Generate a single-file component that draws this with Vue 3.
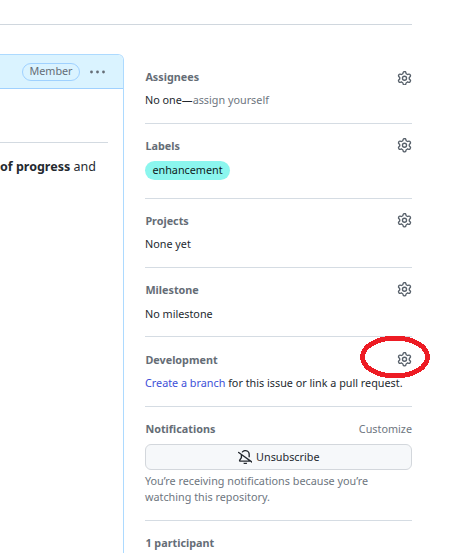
<script setup>
const gear =
  'M8 0a8.2 8.2 0 0 1 .701.031C9.444.095 9.99.645 10.16 1.29l.288 1.107c.018.066.079.158.212.224.231.114.454.243.668.386.123.082.233.09.299.071l1.103-.303c.644-.176 1.392.021 1.82.63.27.385.506.792.704 1.218.315.675.111 1.422-.364 1.891l-.814.806c-.049.048-.098.147-.088.294.016.257.016.515 0 .772-.01.147.038.246.088.294l.814.806c.475.469.679 1.216.364 1.891a7.977 7.977 0 0 1-.704 1.217c-.428.61-1.176.807-1.82.63l-1.102-.302c-.067-.019-.177-.011-.3.071a5.909 5.909 0 0 1-.668.386c-.133.066-.194.158-.211.224l-.29 1.106c-.168.646-.715 1.196-1.458 1.26a8.006 8.006 0 0 1-1.402 0c-.743-.064-1.289-.614-1.458-1.26l-.289-1.106c-.018-.066-.079-.158-.212-.224a5.738 5.738 0 0 1-.668-.386c-.123-.082-.233-.09-.299-.071l-1.103.303c-.644.176-1.392-.021-1.82-.63a8.12 8.12 0 0 1-.704-1.218c-.315-.675-.111-1.422.363-1.891l.815-.806c.05-.048.098-.147.088-.294a6.214 6.214 0 0 1 0-.772c.01-.147-.038-.246-.088-.294l-.815-.806C.635 6.045.431 5.298.746 4.623a7.92 7.92 0 0 1 .704-1.217c.428-.61 1.176-.807 1.82-.63l1.102.302c.067.019.177.011.3-.071.214-.143.437-.272.668-.386.133-.066.194-.158.211-.224l.29-1.106C6.009.645 6.556.095 7.299.03 7.53.01 7.764 0 8 0Zm-.571 1.525c-.036.003-.108.036-.137.146l-.289 1.105c-.147.561-.549.967-.998 1.189-.173.086-.34.183-.5.29-.417.278-.97.423-1.529.27l-1.103-.303c-.109-.03-.175.016-.195.045-.22.312-.412.644-.573.99-.014.031-.021.11.059.19l.815.806c.411.406.562.957.53 1.456a4.709 4.709 0 0 0 0 .582c.032.499-.119 1.05-.53 1.456l-.815.806c-.081.08-.073.159-.059.19.162.346.353.677.573.989.02.03.085.076.195.046l1.102-.303c.56-.153 1.113-.008 1.53.27.161.107.328.204.501.29.447.222.85.629.997 1.189l.289 1.105c.029.109.101.143.137.146a6.6 6.6 0 0 0 1.142 0c.036-.003.108-.036.137-.146l.289-1.105c.147-.561.549-.967.998-1.189.173-.086.34-.183.5-.29.417-.278.97-.423 1.529-.27l1.103.303c.109.029.175-.016.195-.045.22-.313.411-.644.573-.99.014-.031.021-.11-.059-.19l-.815-.806c-.411-.406-.562-.957-.53-1.456a4.709 4.709 0 0 0 0-.582c-.032-.499.119-1.05.53-1.456l.815-.806c.081-.08.073-.159.059-.19a6.464 6.464 0 0 0-.573-.989c-.02-.03-.085-.076-.195-.046l-1.102.303c-.56.153-1.113.008-1.53-.27a4.44 4.44 0 0 0-.501-.29c-.447-.222-.85-.629-.997-1.189l-.289-1.105c-.029-.11-.101-.143-.137-.146a6.6 6.6 0 0 0-1.142 0ZM11 8a3 3 0 1 1-6 0 3 3 0 0 1 6 0ZM9.5 8a1.5 1.5 0 1 0-3.001.001A1.5 1.5 0 0 0 9.5 8Z'
</script>

<template>
  <div class="page">
    <header class="top"></header>
    <div class="columns">
      <main class="comment">
        <div class="comment-head">
          <span class="badge">Member</span>
          <svg class="dots" viewBox="0 0 17 6" width="17" height="6">
            <circle cx="2.5" cy="3" r="1.4" /><circle cx="8.5" cy="3" r="1.4" /><circle cx="14.5" cy="3" r="1.4" />
          </svg>
        </div>
        <div class="comment-body">
          <hr class="rule" />
          <p class="progress"><b>of progress</b> and</p>
        </div>
      </main>

      <aside class="sidebar">
        <section class="item assignees">
          <div class="head">
            <h2>Assignees</h2>
            <svg class="gear" viewBox="0 0 16 16"><path :d="gear" /></svg>
          </div>
          <p>No one—<a class="muted">assign yourself</a></p>
        </section>
        <section class="item labels">
          <div class="head">
            <h2>Labels</h2>
            <svg class="gear" viewBox="0 0 16 16"><path :d="gear" /></svg>
          </div>
          <span class="label">enhancement</span>
        </section>
        <section class="item projects">
          <div class="head">
            <h2>Projects</h2>
            <svg class="gear" viewBox="0 0 16 16"><path :d="gear" /></svg>
          </div>
          <p>None yet</p>
        </section>
        <section class="item milestone">
          <div class="head">
            <h2>Milestone</h2>
            <svg class="gear" viewBox="0 0 16 16"><path :d="gear" /></svg>
          </div>
          <p>No milestone</p>
        </section>
        <section class="item development">
          <div class="head">
            <h2>Development</h2>
            <svg class="gear" viewBox="0 0 16 16"><path :d="gear" /></svg>
            <svg class="ring" viewBox="0 0 72 46" width="72" height="46">
              <ellipse cx="36" cy="23" rx="32.5" ry="19" />
            </svg>
          </div>
          <p><a class="link">Create a branch</a> for this issue or link a pull request.</p>
        </section>
        <section class="item notifications">
          <div class="head">
            <h2>Notifications</h2>
            <a class="muted">Customize</a>
          </div>
          <button class="btn">
            <svg class="bell" viewBox="0 0 16 16">
              <path d="m4.182 4.31.016.011 10.104 7.316.013.01 1.375.996a.75.75 0 1 1-.88 1.214L13.626 13H2.518a1.516 1.516 0 0 1-1.263-2.36l1.703-2.554A.255.255 0 0 0 3 7.947V5.305L.31 3.357a.75.75 0 1 1 .88-1.214Zm7.373 7.19L4.5 6.391v1.556c0 .346-.102.683-.294.97l-1.703 2.556a.017.017 0 0 0-.003.01c0 .005.002.009.005.012l.006.004.007.001ZM8 1.5c-.997 0-1.895.416-2.534 1.086A.75.75 0 1 1 4.38 1.55 5 5 0 0 1 13 5v2.373a.75.75 0 0 1-1.5 0V5A3.5 3.5 0 0 0 8 1.5ZM8 16a2 2 0 0 1-1.985-1.75c-.017-.137.097-.25.235-.25h3.5c.138 0 .252.113.235.25A2 2 0 0 1 8 16Z" />
            </svg>
            <span>Unsubscribe</span>
          </button>
          <p class="reason">You’re receiving notifications because you’re watching this repository.</p>
        </section>
        <section class="item participants">
          <div class="head"><h2>1 participant</h2></div>
        </section>
      </aside>
    </div>
  </div>
</template>

<style>
body {
  background: #fff;
}
</style>

<style scoped>
* {
  box-sizing: border-box;
}
.page {
  width: 456px;
  height: 553px;
  overflow: hidden;
  font-family: 'Noto Sans', sans-serif;
  font-size: 10.8px;
  line-height: 16px;
  color: #24292f;
}
.top {
  width: 412px;
  height: 25px;
  border-bottom: 1px solid #d0d7de;
}
.columns {
  display: flex;
  gap: 21px;
  height: 528px;
}
.comment {
  width: 124px;
  height: 540px;
  margin-top: 29px;
  border: 1px solid #addaff;
  border-left: 0;
  border-top-right-radius: 6px;
  overflow: hidden;
}
.comment-head {
  display: flex;
  align-items: center;
  gap: 9px;
  height: 34px;
  padding-left: 22px;
  background: #daf3ff;
  border-bottom: 1px solid #a0d1ff;
}
.badge {
  display: flex;
  align-items: center;
  justify-content: center;
  width: 58px;
  height: 18px;
  padding-bottom: 1px;
  border: 1px solid #9fd1ff;
  border-radius: 9px;
  color: #656d76;
}
.dots {
  fill: #656d76;
}
.comment-body {
  padding-right: 15px;
}
.rule {
  height: 1px;
  margin: 53px 0 0;
  border: 0;
  background: #d3dae1;
}
.progress {
  margin: 14px 0 0;
  font-size: 12.5px;
  line-height: 20px;
  white-space: nowrap;
}
.sidebar {
  width: 267px;
}
.item {
  border-bottom: 1px solid #d5dce3;
}
.head {
  position: relative;
  display: flex;
  justify-content: space-between;
  height: 16px;
}
h2 {
  margin: 0;
  padding-left: 0.4px;
  font-size: 10.8px;
  font-weight: 700;
  color: #656d76;
}
p {
  margin: 7px 0 0;
  white-space: nowrap;
}
.gear {
  width: 15px;
  height: 14.5px;
  fill: #57606a;
}
.muted {
  color: #6e7680;
}
.link {
  color: #3d4fd8;
}
.assignees {
  height: 99px;
  padding-top: 44px;
}
.labels {
  height: 75px;
  padding-top: 14px;
}
.assignees .gear {
  margin-top: 1.6px;
}
.label {
  display: flex;
  align-items: center;
  justify-content: center;
  width: 85px;
  height: 19px;
  margin-top: 7px;
  padding-bottom: 1px;
  border-radius: 10px;
  background: #8bf6ee;
  color: #101c1c;
}
.projects,
.milestone {
  height: 69px;
  padding-top: 14px;
}
.milestone p {
  margin-top: 8px;
}
.development {
  height: 70px;
  padding-top: 15px;
}
.ring {
  position: absolute;
  top: -18px;
  left: 214px;
  fill: none;
  stroke: #ed1c24;
  stroke-width: 5;
  shape-rendering: crispEdges;
}
.notifications {
  height: 114px;
  padding-top: 14px;
}
.btn {
  display: flex;
  align-items: center;
  justify-content: center;
  gap: 4px;
  width: 267px;
  height: 26px;
  margin-top: 7px;
  padding: 0;
  border: 1px solid #d3d7dc;
  border-radius: 6px;
  background: #f6f8fa;
  font: inherit;
  color: #24292f;
}
.bell {
  width: 14.6px;
  height: 14.6px;
  fill: #24292f;
}
.reason {
  margin-top: 3px;
  width: 240px;
  white-space: normal;
  color: #6e7680;
}
.participants {
  padding-top: 14px;
  border: 0;
}
</style>
